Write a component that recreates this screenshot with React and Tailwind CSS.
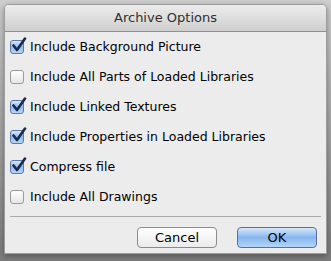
import React from "react";

const items = [
  ["Include Background Picture", true],
  ["Include All Parts of Loaded Libraries", false],
  ["Include Linked Textures", true],
  ["Include Properties in Loaded Libraries", true],
  ["Compress file", true],
  ["Include All Drawings", false],
];

function Box({ checked }) {
  return (
    <div className="relative w-[14px] h-[14px] shrink-0">
      <div
        className={
          checked
            ? "w-[14px] h-[14px] rounded-[3px] border border-[#5a7ba8] bg-gradient-to-b from-[#d6e7fb] via-[#8fbcef] to-[#b7d5f6]"
            : "w-[14px] h-[14px] rounded-[3px] border border-[#9a9a9a] bg-gradient-to-b from-[#ffffff] to-[#e6e6e6]"
        }
      />
      {checked && (
        <svg className="absolute left-[1px] top-[-3px]" width="16" height="16" viewBox="0 0 16 16">
          <path d="M2.5 8.5 L6 13 L14 1.5" fill="none" stroke="#1a2a4a" strokeWidth="2.6" strokeLinecap="round" strokeLinejoin="round" />
        </svg>
      )}
    </div>
  );
}

export default function App() {
  return (
    <div
      className="w-[331px] h-[261px] bg-gradient-to-b from-[#cfcfcf] to-[#7c7c7c] pt-[4px] pl-[4px]"
      style={{ fontFamily: '"DejaVu Sans", sans-serif' }}
    >
      <div className="w-[323px] h-[250px] rounded-t-[5px] border border-[#9c9c9c] bg-[#ececec] flex flex-col overflow-hidden shadow-[0_2px_6px_rgba(0,0,0,0.35)]">
        <div className="h-[27px] shrink-0 bg-gradient-to-b from-[#ececec] to-[#cfcfcf] border-b border-[#8f8f8f] flex items-center justify-center text-[13px] text-[#2e2e2e]">
          Archive Options
        </div>
        <div className="flex flex-col pl-[5px]">
          {items.map(([label, checked]) => (
            <div key={label} className="h-[30px] flex items-center gap-[6px] text-[12.5px] text-black">
              <Box checked={checked} />
              <span>{label}</span>
            </div>
          ))}
        </div>
        <div className="mx-[5px] mt-[4px] h-px bg-[#a9a9a9]" />
        <div className="flex justify-end gap-[20px] pr-[9px] pt-[10px]">
          <button className="w-[80px] h-[21px] rounded-[4px] border border-[#8b8b8b] bg-gradient-to-b from-[#ffffff] to-[#ebebeb] text-[13px] text-black leading-none">
            Cancel
          </button>
          <button className="w-[80px] h-[21px] rounded-[4px] border border-[#5870a0] bg-gradient-to-b from-[#d9e9fb] via-[#86b6ee] to-[#b4d6f7] text-[13px] text-black leading-none">
            OK
          </button>
        </div>
      </div>
    </div>
  );
}
